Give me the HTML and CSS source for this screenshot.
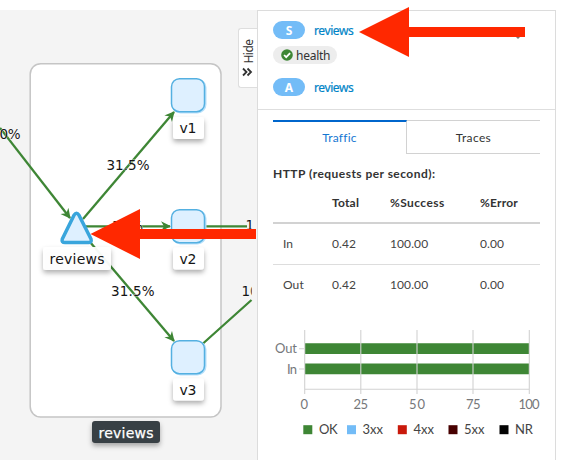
FILE: index.html
```html
<!DOCTYPE html>
<html lang="en">
<head>
<meta charset="utf-8">
<title>Service graph</title>
<link rel="stylesheet" href="styles.css">
</head>
<body>
<main class="layout">
  <section class="graph">
    <svg class="canvas" width="257" height="450" viewBox="0 10 257 450">
      <defs>
        <marker id="tip" markerUnits="userSpaceOnUse" markerWidth="12" markerHeight="12" refX="9" refY="5" orient="auto"><path d="M0 0 10 5 0 10 3 5Z"/></marker>
        <filter id="shadow" x="-30%" y="-40%" width="160%" height="200%"><feDropShadow dx="0" dy="3" stdDeviation="2.5" flood-color="#000" flood-opacity=".32"/></filter>
        <clipPath id="viewport"><path d="M0 10H251.700V460H0Z"/></clipPath>
      </defs>
      <rect class="group" x="30.2" y="63.7" width="190.8" height="353.3" rx="10.5"/>
      <g class="edges">
        <path class="to" d="M0 128 70 218"/>
        <path class="to" d="M83 219 174 112"/>
        <path class="to" d="M86 226.3H170"/>
        <path class="to" d="M90 242 174 341"/>
        <path d="M205 226.3H247M203 343.500 251.500 300"/>
      </g>
      <g class="edge-labels" clip-path="url(#viewport)">
        <text x="-.5" y="138.700" textLength="21">0%</text>
        <text x="106.500" y="169.500" textLength="43">31.5%</text>
        <text x="111" y="296" textLength="43.500">31.5%</text>
        <text x="112" y="231" textLength="31">37%</text>
        <text x="245.500" y="230">1</text>
        <text x="241.500" y="296">10</text>
      </g>
      <g class="nodes">
        <rect class="halo" x="172.500" y="79.500" width="33" height="33" rx="8"/><rect x="171.500" y="78.700" width="33" height="33" rx="8"/>
        <rect class="halo" x="172.500" y="210.500" width="33" height="33" rx="8"/><rect x="171.500" y="209.700" width="33" height="33" rx="8"/>
        <rect class="halo" x="172.500" y="341.500" width="33" height="33" rx="8"/><rect x="171.500" y="340.700" width="33" height="33" rx="8"/>
        <path class="service" d="M74 215.200Q76.500 211.500 79 215.200L91 239Q92 242.600 88.500 242.600H65Q61.300 242.600 62.300 239Z"/>
      </g>
      <g class="plates" filter="url(#shadow)">
        <rect x="173" y="117" width="31" height="22" rx="3"/>
        <rect x="173" y="247.500" width="31" height="22" rx="3"/>
        <rect x="173" y="378.500" width="31" height="22" rx="3"/>
        <rect class="service-plate" x="43" y="247" width="68" height="23" rx="3"/>
        <rect class="dark" x="92" y="421" width="68" height="22" rx="3"/>
      </g>
      <g class="labels">
        <text x="179.500" y="133.400" textLength="17">v1</text>
        <text x="179.500" y="264" textLength="17">v2</text>
        <text x="179.500" y="395" textLength="17">v3</text>
        <text x="49.500" y="264" textLength="55">reviews</text>
        <text class="light" x="98.500" y="437.500" textLength="55">reviews</text>
      </g>
    </svg>
    <div class="hide-tab"><svg width="19" height="59" viewBox="0 0 19 59"><text transform="translate(15 35.500) rotate(-90)" textLength="24.500">Hide</text><path d="m5 40.500 3.500 3.500L5 47.500M9.500 40.500 13 44l-3.500 3.500"/></svg></div>
  </section>
  <aside class="panel">
    <header class="summary">
      <div class="resource"><span class="badge">S</span><a>reviews</a></div>
      <div class="health"><svg width="12" height="12" viewBox="0 0 12 12"><circle cx="6" cy="6" r="5.800" fill="#3e8635"/><path d="m3.100 6 2.100 2.200 3.900-4" fill="none" stroke="#fff" stroke-width="1.800"/></svg><span>health</span></div>
      <div class="resource"><span class="badge">A</span><a>reviews</a></div>
    </header>
    <div class="details">
      <nav class="tabs"><div class="tab active">Traffic</div><div class="tab">Traces</div></nav>
      <h2>HTTP (requests per second):</h2>
      <table>
        <thead><tr><th class="c1"></th><th class="c2">Total</th><th class="c3 wide">%Success</th><th>%Error</th></tr></thead>
        <tbody>
          <tr><td>In</td><td>0.42</td><td>100.00</td><td>0.00</td></tr>
          <tr><td>Out</td><td>0.42</td><td>100.00</td><td>0.00</td></tr>
        </tbody>
      </table>
      <svg class="chart" width="284" height="120" viewBox="272 325 284 120">
        <path class="bars" d="M305 343.200h224v10.800H305ZM305 363.500h224v10.800H305Z"/>
        <path class="grid" d="M304.700 330v64M360.800 330v64M417 330v64M473 330v64M529.300 330v64M304.700 389.200H529.300M299 348.700h5M299 369h5"/>
        <g class="axis">
          <text x="275" y="353.300" textLength="22">Out</text><text x="287" y="373.500" textLength="10">In</text>
          <text x="300.500" y="409" textLength="8.500">0</text><text x="353.500" y="409" textLength="14.500">25</text><text x="409" y="409" textLength="16">50</text><text x="466" y="409" textLength="14.500">75</text><text x="518.500" y="409" textLength="21">100</text>
        </g>
        <g class="legend">
          <rect x="303.300" y="425.200" width="9" height="9" fill="#3e8635"/><text x="319" y="434" textLength="18.500">OK</text>
          <rect x="347" y="425.200" width="9" height="9" fill="#73bcf7"/><text x="362.500" y="434" textLength="20.500">3xx</text>
          <rect x="397.800" y="425.200" width="9" height="9" fill="#c9190b"/><text x="413.500" y="434" textLength="20.500">4xx</text>
          <rect x="448.500" y="425.200" width="9" height="9" fill="#470000"/><text x="464" y="434" textLength="20.500">5xx</text>
          <rect x="499.500" y="425.200" width="9" height="9" fill="#030303"/><text x="515" y="434" textLength="18">NR</text>
        </g>
      </svg>
    </div>
  </aside>
</main>
<svg class="pointers" width="566" height="460" viewBox="0 0 566 460"><path d="M516 37h4l-2 2Z" fill="#777"/><path d="M359 32 409 7v20h116v10H409v20ZM90.500 234 140 209v20h116v10H140v20Z" fill="#ff2800"/></svg>
</body>
</html>
```
FILE: styles.css
```css
* { box-sizing: border-box; }
body { margin: 0; background: #fff; color: #333; font-family: Lato, sans-serif; }
.layout { display: flex; height: 460px; padding-top: 10px; overflow: hidden; }
.graph { position: relative; width: 257px; background: #f4f4f4; }
.canvas { display: block; }
.group { fill: #fff; stroke: #c5c5c5; stroke-width: 1.5; }
.edges path { fill: none; stroke: #3e8635; stroke-width: 2.3; }
.edges .to { marker-end: url(#tip); }
#tip path { fill: #3e8635; stroke: none; }
.edge-labels, .labels { font-family: "DejaVu Sans", sans-serif; fill: #151515; }
.edge-labels { font-size: 13.5px; paint-order: stroke; stroke: #fff; stroke-width: .6px; }
.labels { font-size: 14px; }
.labels .light { fill: #fff; stroke: #fff; stroke-width: .25px; }
.nodes rect { fill: #def0ff; stroke: #54b0e1; stroke-width: 1.5; }
.nodes .halo { fill: none; stroke: #b9e0fa; stroke-width: 2; }
.nodes .service { fill: #def0ff; stroke: #39a5dc; stroke-width: 3.5; stroke-linejoin: round; }
.plates rect { fill: #fff; }
.plates .service-plate { fill-opacity: .94; }
.plates .dark { fill: #393f44; }
.hide-tab { position: absolute; top: 18px; right: 0; width: 19px; height: 60px; background: #fff; border: 1px solid #dedede; border-right: 0; border-radius: 3px 0 0 3px; }
.hide-tab svg { display: block; margin: -1px 0 0 -1px; }
.hide-tab text { font: 12px "Noto Sans", sans-serif; fill: #333; }
.hide-tab path { fill: none; stroke: #333; stroke-width: 1.8; }
.panel { width: 299px; background: #fff; border: 1px solid #dcdcdc; border-bottom: 0; }
.summary { display: flex; flex-direction: column; align-items: flex-start; height: 99px; padding: 10px 15px 0; border-bottom: 1px solid #dedede; }
.resource { display: flex; align-items: center; gap: 9px; height: 18px; font: 12px/18px "Noto Sans", sans-serif; }
.resource a { padding-top: 2px; color: #0084c7; letter-spacing: -.4px; -webkit-text-stroke: .2px #0084c7; }
.badge { width: 32px; height: 18px; border-radius: 9px; background: #73bcf7; color: #fff; font-weight: 700; text-align: center; line-height: 19px; }
.health { display: flex; align-items: center; gap: 3px; width: 64px; height: 18px; margin: 7px 0 14px; padding-left: 8px; border-radius: 9px; background: #ededed; font: 12px/18px "Noto Sans", sans-serif; letter-spacing: -.25px; }
.health span { padding-top: 1px; }
.details { padding: 10px 0 0 15px; }
.tabs { display: flex; width: 267px; height: 34px; }
.tab { width: 133px; border-top: 1px solid #d2d2d2; border-bottom: 1px solid #d2d2d2; font-size: 12px; line-height: 34px; text-align: center; letter-spacing: .35px; }
.tab.active { width: 134px; border-top: 2px solid #06c; border-right: 1px solid #d2d2d2; border-bottom: 0; color: #1677d2; line-height: 31px; letter-spacing: .2px; }
h2 { margin: 11px 0 0; font-size: 12px; line-height: 18px; font-weight: 700; letter-spacing: .46px; }
table { width: 267px; border-collapse: collapse; table-layout: fixed; font-size: 12px; }
th, td { height: 41px; padding: 0; text-align: left; border-bottom: 1px solid #ddd; }
th { height: 40px; font-weight: 700; border-bottom: 2px solid #d2d2d2; letter-spacing: .2px; }
th.wide { letter-spacing: .4px; }
tbody tr:last-child td { border-bottom: 0; }
td:first-child { padding-left: 10px; }
td { letter-spacing: .1px; color: #444; }
.c1 { width: 59px; }
.c2 { width: 58px; }
.c3 { width: 90px; }
.chart { display: block; margin: 20px 0 0 -1px; }
.bars { fill: #3e8635; }
.grid { fill: none; stroke: #d2d2d2; stroke-width: 1.1; }
.axis { font-size: 13px; fill: #75777a; }
.legend { font-size: 13px; fill: #444; }
.pointers { position: absolute; top: 0; left: 0; pointer-events: none; }
```
